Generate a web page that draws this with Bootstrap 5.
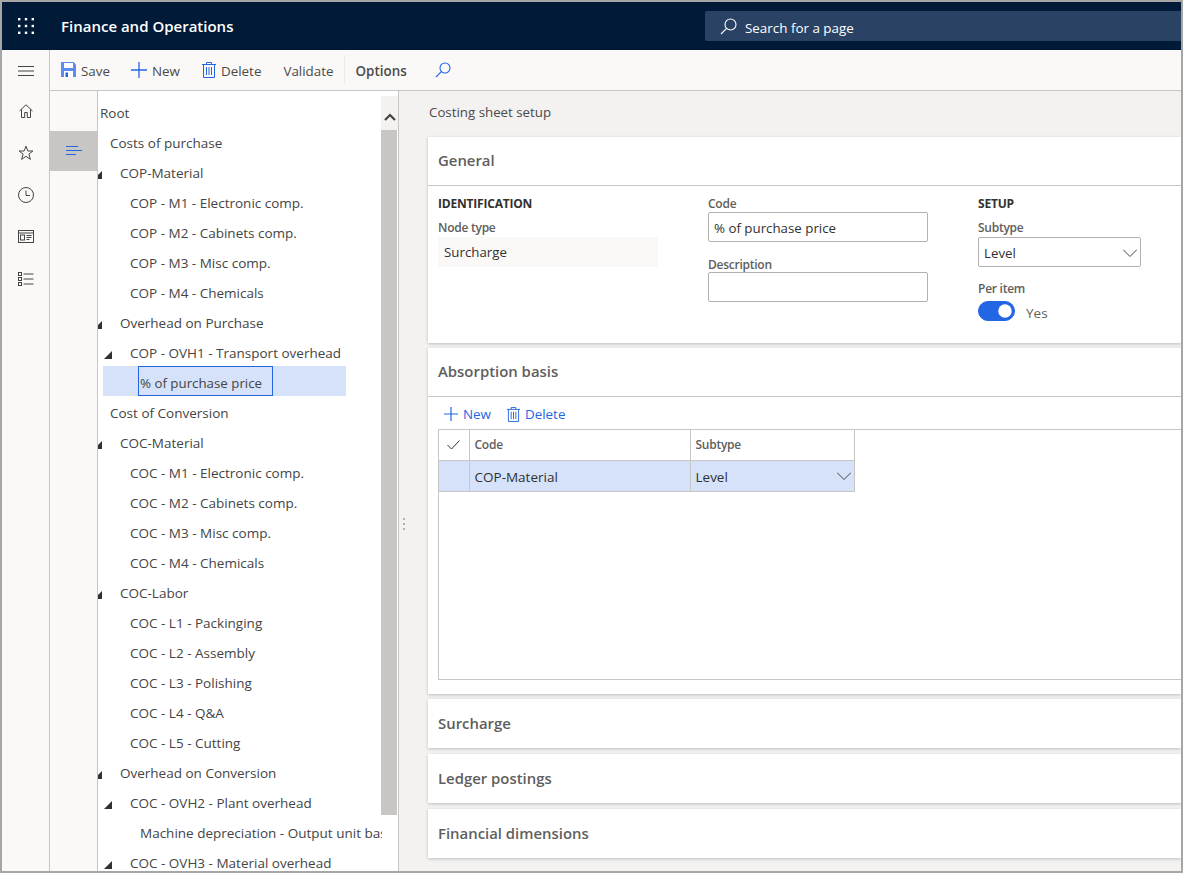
<!DOCTYPE html>
<html>

<head>
    <title>Finance and Operations</title>
    <link rel="stylesheet" href="https://cdn.jsdelivr.net/npm/bootstrap@5.3.0/dist/css/bootstrap.min.css">
    <style>
        html, body { height: 100%; overflow: hidden; }
        body { font-family: "Open Sans", "Noto Sans", sans-serif; font-size: 13.5px; color: #323130; background: #fff; }
        svg { display: block; flex: none; }

        .app-frame { height: 873px; border: 2px solid #a6a6a6; overflow: hidden; }

        /* top bar */
        .top-bar { height: 48px; background: #001a38; padding: 0; flex-wrap: nowrap; }
        .waffle { width: 47px; }
        .app-name { color: #fff; font-size: 15px; font-weight: 600; margin-left: 12px; padding-top: 1px; width: 644px; }
        .page-search { height: 30px; margin-top: 9px; flex: 1; background: #2a4365; color: #fff; border-radius: 2px 0 0 2px; padding-left: 15px; gap: 8px; font-size: 13.4px; }
        .page-search span { padding-top: 4px; }

        /* left rail */
        .nav-rail { width: 48px; flex: none; background: #faf9f8; border-right: 1px solid #c8c6c4; }
        .rail-btn { height: 42px; flex: none; }
        .rail-first { height: 40px; padding-top: 2px; }

        .action-bar { height: 41px; flex: none; background: #faf9f8; border-bottom: 1px solid #c8c6c4; padding-left: 11px; }
        .act { display: flex; align-items: center; gap: 5px; color: #4a4a4a; padding: 0; border: 0; background: none; font-size: 13.4px; margin-right: 21px; }
        .act span { padding-top: 3px; }
        .act-wide { margin-right: 22px; }
        .act-last { margin-right: 10px; }
        .act-sep { width: 1px; height: 29px; background: #edebe9; margin-right: 11px; }
        .act-bold { font-weight: 600; margin-right: 28px; }

        /* tree */
        .tree-tabs { width: 48px; flex: none; background: #faf9f8; border-right: 1px solid #c8c6c4; padding-top: 40px; }
        .tree-tab { height: 40px; background: #c8c6c4; }
        .tree-pane { width: 301px; flex: none; background: #fff; border-right: 1px solid #c8c6c4; position: relative; overflow: hidden; }
        .tree-scroll { width: 284px; height: 100%; overflow: hidden; padding-top: 7px; }
        .tree-row { height: 30px; display: flex; align-items: center; white-space: nowrap; color: #444; }
        .tree-row span { padding-top: 2px; }
        .lvl-0 { padding-left: 2px; }
        .lvl-1 { padding-left: 12px; }
        .lvl-2 { padding-left: 22px; }
        .lvl-3 { padding-left: 32px; }
        .lvl-4 { padding-left: 42px; }
        .tree-arrow { margin-left: -26px; margin-right: 18px; margin-top: 4px; }
        .tree-sel { width: 243px; height: 30px; margin: -2px 0 2px 5px; background: #d5e2f9; padding-left: 35px; color: #444; }
        .tree-focus { width: 135px; height: 30px; border: 1px solid #2266e3; padding-left: 1px; line-height: 32px; font-size: 13.3px; }

        .vscroll { position: absolute; top: 5px; right: 0; bottom: 0; width: 17px; }
        .vscroll-up { height: 34px; background: #f3f2f1; padding-top: 8px; }
        .vscroll-thumb { height: 685px; background: #c8c6c4; width: 16px; }

        /* content */
        .content-pane { flex: 1; min-width: 0; background: #f3f2f1; padding-left: 29px; position: relative; overflow: hidden; }
        .page-title { height: 46px; line-height: 43px; padding-left: 1px; color: #4a4a4a; font-size: 13.3px; }
        .splitter { position: absolute; left: 4px; top: 427px; }
        .fast-tab { border: 0; border-radius: 0; box-shadow: 0 1px 3px rgba(0,0,0,.22); margin-bottom: 5px; background: #fff; }
        .fast-next { margin-top: 6px; }
        .fast-head { height: 49px; line-height: 49px; padding-left: 10px; font-size: 14.9px; font-weight: 600; color: #605e5c; }
        .fast-tab.open .fast-head { border-bottom: 1px solid #c8c6c4; line-height: 47px; }
        .general-body { height: 157px; padding: 9px 0 0 10px; }
        .field-col { width: 270px; flex: none; }
        .group-title { font-size: 12px; font-weight: 700; color: #323130; line-height: 18px; height: 19px; text-transform: uppercase; letter-spacing: -0.2px; margin-bottom: 6px; }
        .field-label { font-size: 12px; font-weight: 600; color: #605e5c; line-height: 16px; height: 16px; margin-bottom: 1px; letter-spacing: -0.25px; }
        .label-low { padding-top: 1px; }
        .field-gap { margin-bottom: 14px; }
        .label-tight { margin-bottom: 0; }
        .label-toggle { margin-top: 13px; margin-bottom: 5px; }
        .field-box { width: 220px; height: 30px; font-size: 13.3px; color: #323130; padding: 2px 5px 0; border-radius: 2px; border: 1px solid #b3b0ad; box-shadow: none; }
        .field-box.form-control { min-height: 30px; }
        .field-read { background: #faf9f8; border-color: #faf9f8; line-height: 28px; padding-top: 0; border-radius: 0; }
        .field-select { width: 163px; position: relative; line-height: 26px; }
        .chev { position: absolute; right: 3px; top: 8px; }
        .toggle-row { gap: 11px; height: 20px; }
        .toggle-row .form-check-input { width: 37px; height: 20px; margin: 0; float: none; background-color: #2266e3; border-color: #2266e3; }
        .toggle-row.form-switch { padding-left: 0; min-height: 0; margin: 0; }
        .toggle-text { color: #605e5c; padding-top: 5px; }

        .absorb-body { height: 297px; }
        .grid-bar { height: 32px; padding-left: 16px; padding-top: 3px; gap: 16px; }
        .grid-act { display: flex; align-items: center; gap: 5px; color: #2266e3; padding: 0; border: 0; background: none; font-size: 13.4px; }
        .grid-box { height: 251px; margin-left: 10px; border: 1px solid #c8c6c4; border-right: 0; }
        .grid-table { width: 415px; table-layout: fixed; margin: 0; border-collapse: collapse; }
        .grid-table th, .grid-table td { height: 31px; padding: 0 5px; border: 1px solid #c8c6c4; vertical-align: middle; }
        .grid-table tr > :first-child { border-left: 0; }
        .grid-table thead th { border-top: 0; font-size: 12px; font-weight: 600; color: #605e5c; letter-spacing: -0.25px; padding-top: 1px; }
        .grid-table tbody td { background: #d5e2f9; color: #323130; position: relative; padding-top: 3px; }
        .col-check { width: 30px; }
        .col-code { width: 221px; }
        .col-sub { width: 164px; }
    </style>
</head>

<body>
    <div class="app-frame d-flex flex-column">
        <!-- top bar -->
        <nav class="navbar top-bar d-flex align-items-start">
            <div class="waffle d-flex justify-content-center align-self-center">
                <svg width="16" height="16" viewBox="0 0 16 16" fill="#fff">
                    <rect x="0" y="0" width="2.4" height="2.4"/><rect x="6.8" y="0" width="2.4" height="2.4"/><rect x="13.6" y="0" width="2.4" height="2.4"/>
                    <rect x="0" y="6.8" width="2.4" height="2.4"/><rect x="6.8" y="6.8" width="2.4" height="2.4"/><rect x="13.6" y="6.8" width="2.4" height="2.4"/>
                    <rect x="0" y="13.6" width="2.4" height="2.4"/><rect x="6.8" y="13.6" width="2.4" height="2.4"/><rect x="13.6" y="13.6" width="2.4" height="2.4"/>
                </svg>
            </div>
            <div class="app-name align-self-center">Finance and Operations</div>
            <div class="page-search d-flex align-items-center">
                <svg width="17" height="17" viewBox="0 0 17 17" fill="none" stroke="#fff" stroke-width="1.1"><circle cx="10.5" cy="6.5" r="5.5"/><path d="M6.6 10.4 1 16"/></svg>
                <span>Search for a page</span>
            </div>
        </nav>

        <div class="d-flex flex-grow-1" style="min-height:0">
            <!-- left rail -->
            <div class="nav-rail d-flex flex-column">
                <div class="rail-btn rail-first d-flex align-items-center justify-content-center">
                    <svg width="16" height="10" viewBox="0 0 16 10" stroke="#444" stroke-width="1"><path d="M0 .5h16M0 5h16M0 9.500h16"/></svg>
                </div>
                <div class="rail-btn d-flex align-items-center justify-content-center">
                    <svg width="14" height="14" viewBox="0 0 14 14" fill="none" stroke="#444" stroke-width="1"><path d="M.5 7 7 .8 13.5 7M2.5 5.3v8.200h3.200V8.500h2.600v5h3.200V5.300"/></svg>
                </div>
                <div class="rail-btn d-flex align-items-center justify-content-center">
                    <svg width="16" height="16" viewBox="0 0 16 16" fill="none" stroke="#444" stroke-width="1"><path d="M8 1.200 9.900 6h5l-4 3.100 1.500 5.300L8 11.300l-4.400 3.100 1.500-5.300-4-3.100h5z"/></svg>
                </div>
                <div class="rail-btn d-flex align-items-center justify-content-center">
                    <svg width="16" height="16" viewBox="0 0 16 16" fill="none" stroke="#444" stroke-width="1"><circle cx="8" cy="8" r="7.500"/><path d="M8 3.500V8.500h4"/></svg>
                </div>
                <div class="rail-btn d-flex align-items-center justify-content-center">
                    <svg width="16" height="13" viewBox="0 0 16 13" fill="none" stroke="#444" stroke-width="1"><rect x=".5" y=".5" width="15" height="12"/><path d="M.5 3h15"/><rect x="2.500" y="5" width="4" height="5"/><path d="M8.500 5.500h5M8.500 7.500h5M8.500 9.500h3"/></svg>
                </div>
                <div class="rail-btn d-flex align-items-center justify-content-center">
                    <svg width="16" height="14" viewBox="0 0 16 14" fill="none" stroke="#444" stroke-width="1"><rect x=".5" y=".5" width="3" height="3"/><rect x=".5" y="5.500" width="3" height="3"/><rect x=".5" y="10.500" width="3" height="3"/><path d="M5.500 2h10M5.500 7h10M5.500 12h10"/></svg>
                </div>
            </div>

            <div class="d-flex flex-column flex-grow-1" style="min-width:0">
                <!-- action bar -->
                <div class="action-bar d-flex align-items-center">
                    <button class="act">
                        <svg width="15" height="15" viewBox="0 0 15 15"><path d="M0 0h12.500L15 2.500V15H0z" fill="#5b8def"/><rect x="3" y="1" width="9" height="5" fill="#fff"/><rect x="3" y="9" width="9" height="6" fill="#fff"/><rect x="4.500" y="10.500" width="2.500" height="4.500" fill="#2266e3"/></svg>
                        <span>Save</span>
                    </button>
                    <button class="act act-wide">
                        <svg width="16" height="16" viewBox="0 0 16 16" stroke="#2266e3" stroke-width="1.300"><path d="M8 0v16M0 8h16"/></svg>
                        <span>New</span>
                    </button>
                    <button class="act act-wide">
                        <svg width="14" height="16" viewBox="0 0 14 16" fill="none" stroke="#2266e3" stroke-width="1"><path d="M0 2.500h14M4.500 2.500V.5h5v2M1.500 2.500V15.500h11V2.500M4.500 5v8M7 5v8M9.500 5v8"/></svg>
                        <span>Delete</span>
                    </button>
                    <button class="act act-last"><span>Validate</span></button>
                    <div class="act-sep"></div>
                    <button class="act act-bold"><span>Options</span></button>
                    <svg width="16" height="16" viewBox="0 0 16 16" fill="none" stroke="#2266e3" stroke-width="1.100"><circle cx="10" cy="6" r="5"/><path d="M6.300 9.700 1 15"/></svg>
                </div>

                <div class="d-flex flex-grow-1" style="min-height:0">
                    <!-- tree tab -->
                    <div class="tree-tabs">
                        <div class="tree-tab d-flex align-items-center justify-content-center">
                            <svg width="16" height="9" viewBox="0 0 16 9" stroke="#2266e3" stroke-width="1"><path d="M0 .5h12M0 4.500h16M0 8.500h10"/></svg>
                        </div>
                    </div>

                    <!-- tree -->
                    <div class="tree-pane">
                        <div class="tree-scroll" id="tree"></div>
                        <div class="vscroll">
                            <div class="vscroll-up d-flex align-items-center justify-content-center">
                                <svg width="12" height="8" viewBox="0 0 12 8" fill="none" stroke="#444" stroke-width="2.200"><path d="M1 7l5-5 5 5"/></svg>
                            </div>
                            <div class="vscroll-thumb"></div>
                        </div>
                    </div>

                    <!-- content -->
                    <div class="content-pane">
                        <svg class="splitter" width="3" height="13" viewBox="0 0 3 13" fill="#b3b0ad"><rect y="0" width="2" height="2"/><rect y="5" width="2" height="2"/><rect y="10" width="2" height="2"/></svg>
                        <div class="page-title">Costing sheet setup</div>

                        <div class="card fast-tab open">
                            <div class="fast-head">General</div>
                            <div class="general-body d-flex">
                                <div class="field-col">
                                    <div class="group-title">Identification</div>
                                    <div class="field-label">Node type</div>
                                    <div class="field-box field-read">Surcharge</div>
                                </div>
                                <div class="field-col">
                                    <div class="field-label label-low">Code</div>
                                    <input class="form-control field-box field-gap" type="text" value="% of purchase price">
                                    <div class="field-label label-low label-tight">Description</div>
                                    <input class="form-control field-box" type="text">
                                </div>
                                <div class="field-col">
                                    <div class="group-title">Setup</div>
                                    <div class="field-label">Subtype</div>
                                    <div class="field-box field-select">Level
                                        <svg class="chev" width="14" height="14" viewBox="0 0 14 14" fill="none" stroke="#444" stroke-width="1"><path d="M0 3.500 7 10.500 14 3.500"/></svg>
                                    </div>
                                    <div class="field-label label-low label-toggle">Per item</div>
                                    <div class="form-check form-switch toggle-row d-flex align-items-center">
                                        <input class="form-check-input" type="checkbox" checked>
                                        <span class="toggle-text">Yes</span>
                                    </div>
                                </div>
                            </div>
                        </div>

                        <div class="card fast-tab open">
                            <div class="fast-head">Absorption basis</div>
                            <div class="absorb-body">
                                <div class="grid-bar d-flex align-items-center">
                                    <button class="grid-act">
                                        <svg width="14" height="14" viewBox="0 0 14 14" stroke="#2266e3" stroke-width="1.200"><path d="M7 0v14M0 7h14"/></svg>
                                        <span>New</span>
                                    </button>
                                    <button class="grid-act">
                                        <svg width="13" height="15" viewBox="0 0 14 16" fill="none" stroke="#2266e3" stroke-width="1"><path d="M0 2.500h14M4.500 2.500V.5h5v2M1.500 2.500V15.500h11V2.500M4.500 5v8M7 5v8M9.500 5v8"/></svg>
                                        <span>Delete</span>
                                    </button>
                                </div>
                                <div class="grid-box">
                                    <table class="grid-table">
                                        <colgroup><col class="col-check"><col class="col-code"><col class="col-sub"></colgroup>
                                        <thead>
                                            <tr>
                                                <th><svg class="mx-auto" width="13" height="10" viewBox="0 0 13 10" fill="none" stroke="#323130" stroke-width="1"><path d="M.5 5 4.500 9 12.500 .5"/></svg></th>
                                                <th>Code</th>
                                                <th>Subtype</th>
                                            </tr>
                                        </thead>
                                        <tbody>
                                            <tr>
                                                <td></td>
                                                <td>COP-Material</td>
                                                <td>Level
                                                    <svg class="chev" width="14" height="14" viewBox="0 0 14 14" fill="none" stroke="#444" stroke-width="1"><path d="M0 3.500 7 10.500 14 3.500"/></svg>
                                                </td>
                                            </tr>
                                        </tbody>
                                    </table>
                                </div>
                            </div>
                        </div>

                        <div class="card fast-tab"><div class="fast-head">Surcharge</div></div>
                        <div class="card fast-tab fast-next"><div class="fast-head">Ledger postings</div></div>
                        <div class="card fast-tab fast-next"><div class="fast-head">Financial dimensions</div></div>
                    </div>
                </div>
            </div>
        </div>
    </div>

    <script src="https://cdn.jsdelivr.net/npm/bootstrap@5.3.0/dist/js/bootstrap.bundle.min.js"></script>
    <script>
        // level, text, has arrow
        var rows = [
            [0, "Root"], [1, "Costs of purchase"], [2, "COP-Material", 1],
            [3, "COP - M1 - Electronic comp."], [3, "COP - M2 - Cabinets comp."],
            [3, "COP - M3 - Misc comp."], [3, "COP - M4 - Chemicals"],
            [2, "Overhead on Purchase", 1], [3, "COP - OVH1 - Transport overhead", 1],
            ["sel", "% of purchase price"],
            [1, "Cost of Conversion"], [2, "COC-Material", 1],
            [3, "COC - M1 - Electronic comp."], [3, "COC - M2 - Cabinets comp."],
            [3, "COC - M3 - Misc comp."], [3, "COC - M4 - Chemicals"],
            [2, "COC-Labor", 1], [3, "COC - L1 - Packinging"], [3, "COC - L2 - Assembly"],
            [3, "COC - L3 - Polishing"], [3, "COC - L4 - Q&A"], [3, "COC - L5 - Cutting"],
            [2, "Overhead on Conversion", 1], [3, "COC - OVH2 - Plant overhead", 1],
            [4, "Machine depreciation - Output unit based"], [3, "COC - OVH3 - Material overhead", 1]
        ];
        var tree = document.getElementById("tree");
        var arrow = '<svg class="tree-arrow" width="8" height="8" viewBox="0 0 8 8" fill="#323130"><path d="M8 0V8H0z"/></svg>';
        rows.forEach(function (r) {
            var el = document.createElement("div");
            if (r[0] === "sel") {
                el.className = "tree-sel";
                var box = document.createElement("div");
                box.className = "tree-focus";
                box.textContent = r[1];
                el.appendChild(box);
            } else {
                el.className = "tree-row lvl-" + r[0];
                el.innerHTML = (r[2] ? arrow : "") + "<span></span>";
                el.querySelector("span").textContent = r[1];
            }
            tree.appendChild(el);
        });
    </script>
</body>

</html>
